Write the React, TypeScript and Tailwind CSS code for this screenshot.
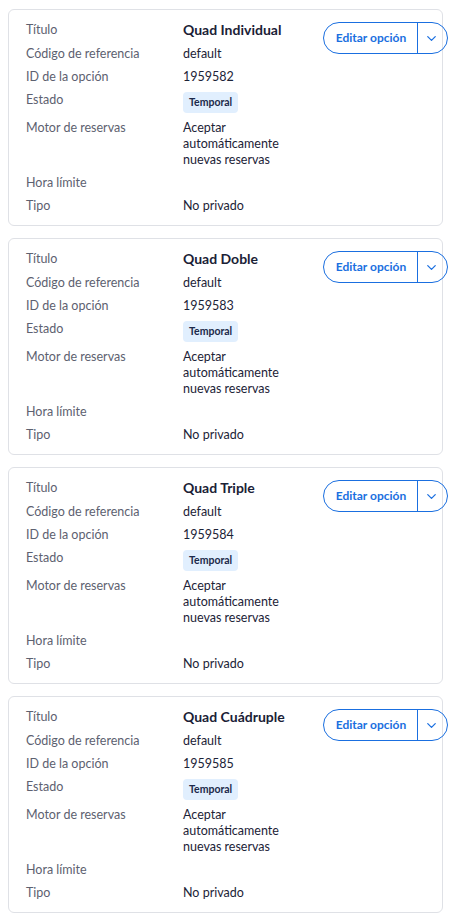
import { FiChevronDown } from "react-icons/fi";

const options = [
  ["Quad Individual", "1959582"],
  ["Quad Doble", "1959583"],
  ["Quad Triple", "1959584"],
  ["Quad Cuádruple", "1959585"],
] as const;

function Row({ label, children }: { label: string; children: React.ReactNode }) {
  return (
    <div className="flex">
      <div className="w-[157px] shrink-0 text-[12.5px] leading-4 text-[#5d6170]">{label}</div>
      <div className="text-[12.5px] leading-4 text-[#1c2337]">{children}</div>
    </div>
  );
}

function OptionCard({ title, id }: { title: string; id: string }) {
  return (
    <div className="flex w-[435px] justify-between rounded-md border border-[#dfe1e6] bg-white pb-[11px] pl-[17px] pt-[12px]">
      <div className="flex flex-col gap-[7px]">
        <Row label="Título">
          <span className="text-[14px] font-bold text-[#1a2136]">{title}</span>
        </Row>
        <Row label="Código de referencia">default</Row>
        <Row label="ID de la opción">{id}</Row>
        <div className="flex">
          <div className="w-[157px] shrink-0 text-[12.5px] leading-4 text-[#5d6170]">Estado</div>
          <span className="flex h-[21px] items-center rounded-[4px] bg-[#e1effe] px-[6px] text-[10.5px] font-bold text-[#1c2a4a]">
            Temporal
          </span>
        </div>
        <Row label="Motor de reservas">
          <div className="w-[100px]">Aceptar automáticamente nuevas reservas</div>
        </Row>
        <Row label="Hora límite">{""}</Row>
        <Row label="Tipo">No privado</Row>
      </div>
      <div className="mr-[-6px] flex h-[32px] items-stretch self-start rounded-full border border-[#1a6fe0] text-[#1a6fe0]">
        <button type="button" className="w-[93px] pl-[1px] text-[12px] font-bold">
          Editar opción
        </button>
        <div className="w-px bg-[#1a6fe0]" />
        <button type="button" className="flex w-[29px] items-center justify-center pr-[2px]">
          <FiChevronDown className="text-[15px]" strokeWidth={2} />
        </button>
      </div>
    </div>
  );
}

export default function App() {
  return (
    <div
      className="flex min-h-screen flex-col gap-[12px] bg-white pl-2 pt-[9px]"
      style={{ fontFamily: "Lato, 'Noto Sans', sans-serif" }}
    >
      {options.map(([title, id]) => (
        <OptionCard key={id} title={title} id={id} />
      ))}
    </div>
  );
}
